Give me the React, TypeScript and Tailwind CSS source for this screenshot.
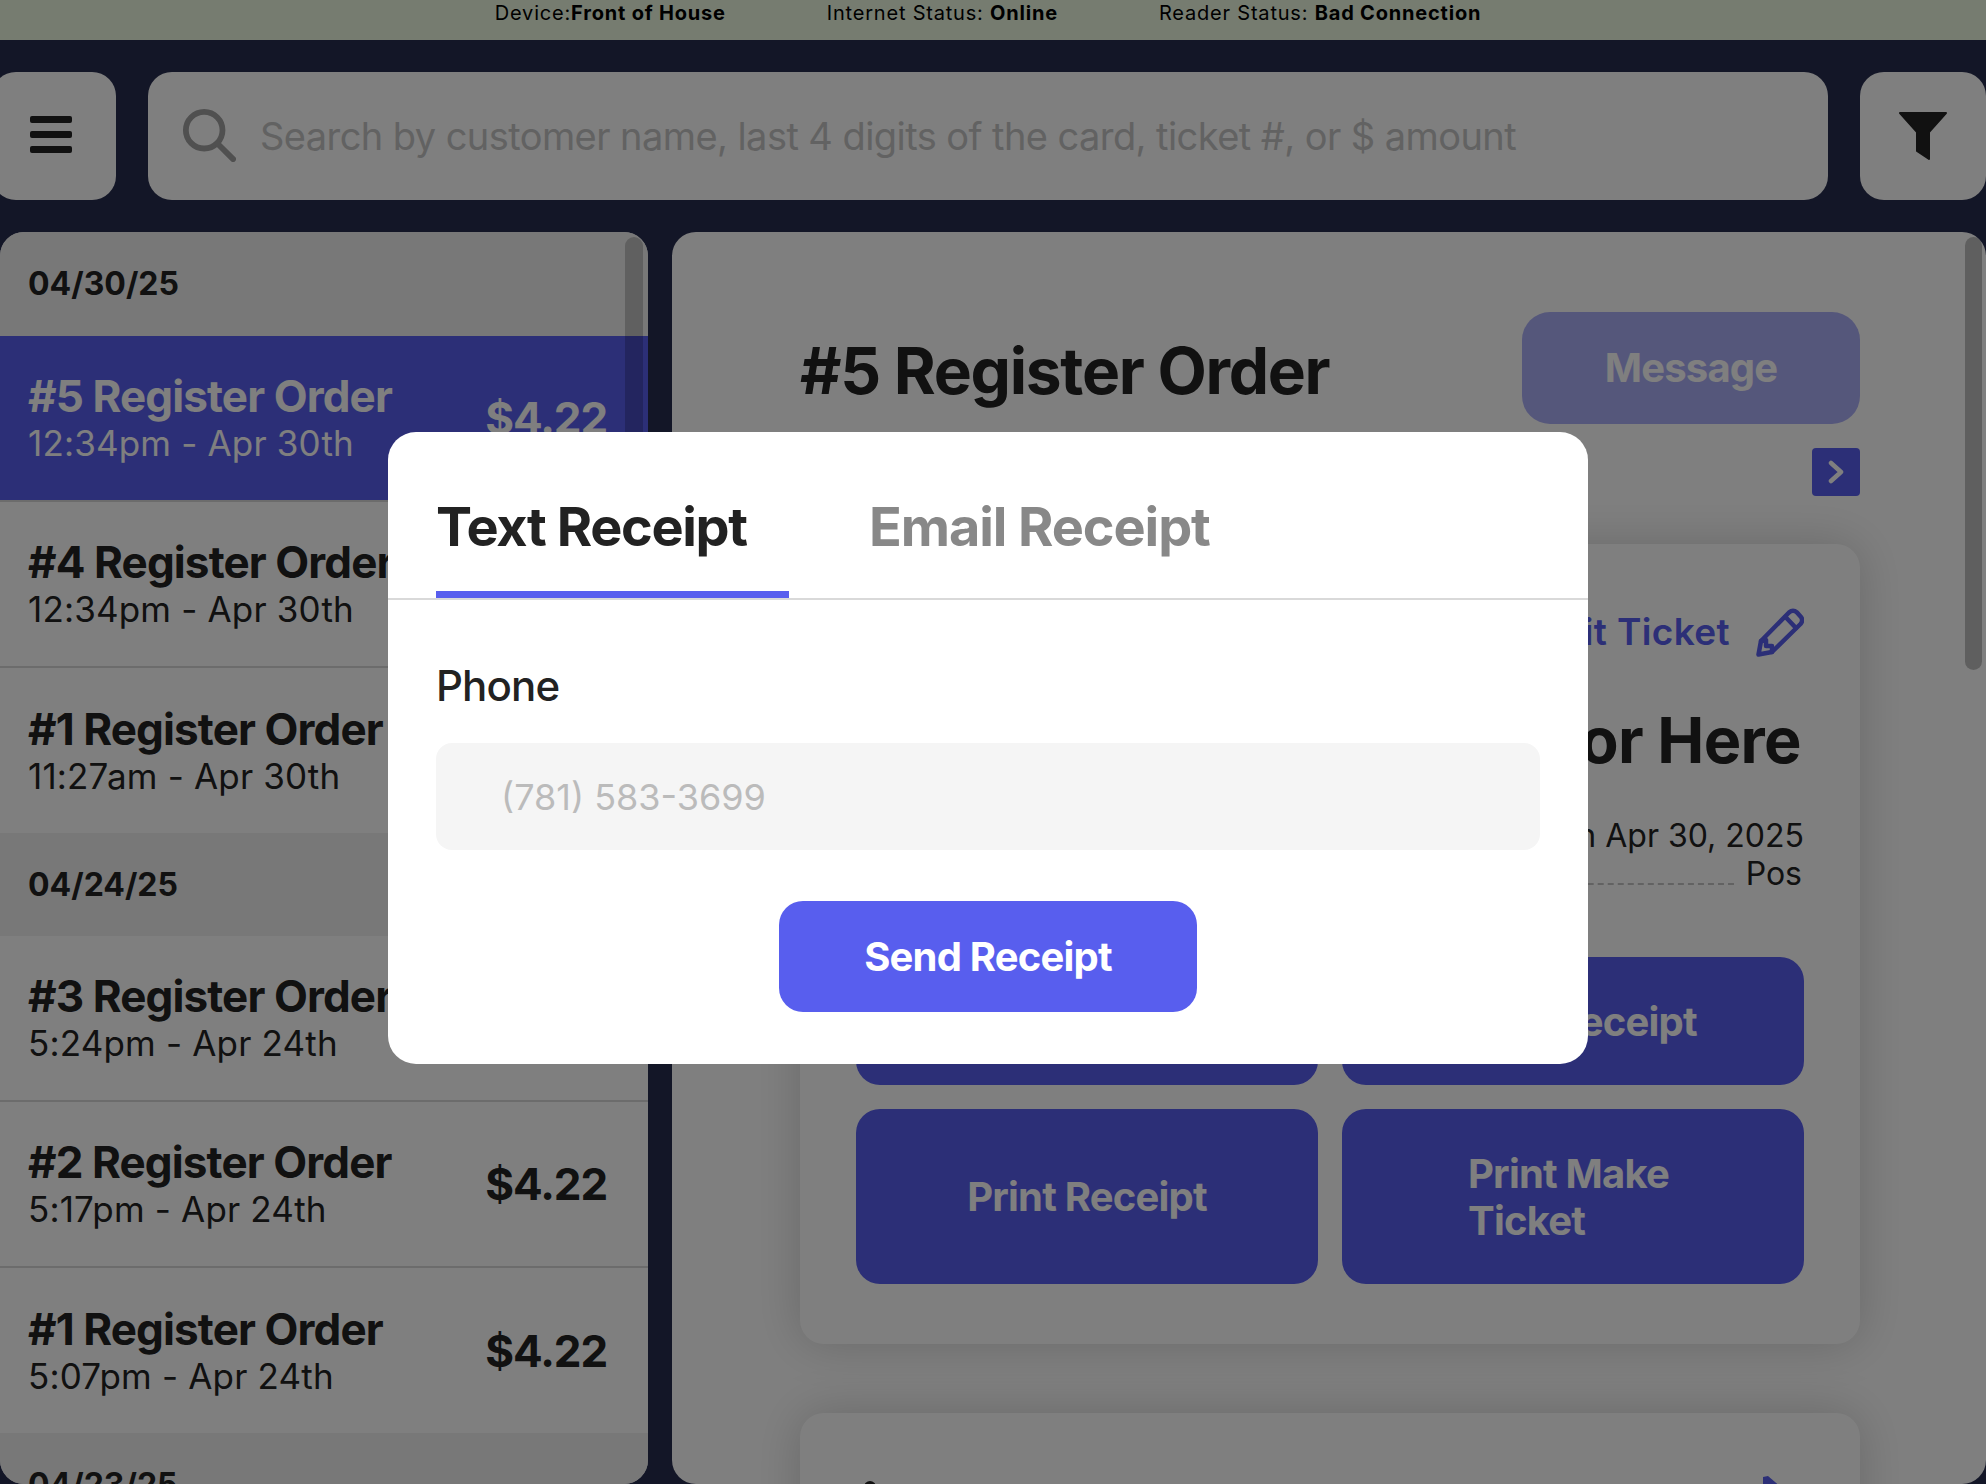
const orders = [
  { type: "date", label: "04/30/25" },
  { type: "order", title: "#5 Register Order", time: "12:34pm - Apr 30th", active: true },
  { type: "order", title: "#4 Register Order", time: "12:34pm - Apr 30th" },
  { type: "order", title: "#1 Register Order", time: "11:27am - Apr 30th", last: true },
  { type: "date", label: "04/24/25" },
  { type: "order", title: "#3 Register Order", time: "5:24pm - Apr 24th" },
  { type: "order", title: "#2 Register Order", time: "5:17pm - Apr 24th" },
  { type: "order", title: "#1 Register Order", time: "5:07pm - Apr 24th", last: true },
  { type: "date", label: "04/23/25" },
];

const OrderList = () => (
  <aside className="relative w-[648px] shrink-0 h-[1252px] overflow-hidden rounded-[24px] bg-white">
    {orders.map((item, i) =>
      item.type === "date" ? (
        <div
          key={i}
          className={`flex items-center pl-[28px] bg-[#f0f0f0] text-[32px] font-bold text-[#222] ${i === 0 ? "h-[104px]" : "h-[103px]"}`}
        >
          {item.label}
        </div>
      ) : (
        <div
          key={i}
          className={`flex items-center justify-between pl-[28px] pr-[41px] ${item.last ? "h-[165px]" : "h-[166px] border-b-2 border-[#d9d9d9]"} ${
            item.active ? "bg-[#585eee] text-white" : "bg-white text-[#222]"
          }`}
        >
          <div className="flex flex-col">
            <span className="text-[44px] leading-[50px] font-bold tracking-[-0.02em] whitespace-nowrap">{item.title}</span>
            <span className="text-[35px] leading-[44px] font-normal tracking-[0.005em] whitespace-nowrap">{item.time}</span>
          </div>
          <span className="text-[44px] font-bold tracking-[-0.025em]">$4.22</span>
        </div>
      )
    )}
    <div className="absolute right-[5px] top-[5px] w-[18px] h-[380px] rounded-full bg-black/20" />
  </aside>
);

const ActionButton = ({ label, className = "" }: { label?: string; className?: string }) => (
  <button className={`rounded-[24px] bg-[#585eee] text-white text-[40px] leading-[47px] font-bold tracking-[-0.02em] ${className}`}>{label}</button>
);

const TicketPanel = () => (
  <main className="relative flex-1 h-[1252px] overflow-hidden rounded-[24px] bg-white pl-[128px] pr-[126px] pt-[80px]">
    <div className="flex items-center justify-between">
      <h1 className="pt-[5px] text-[64px] font-bold tracking-[-0.02em] text-[#222]">#5 Register Order</h1>
      <button className="w-[338px] h-[112px] rounded-[28px] bg-[#585eee]/50 text-white text-[40px] font-bold tracking-[-0.02em]">Message</button>
    </div>

    <div className="flex justify-end mt-[24px]">
      <button className="w-[48px] h-[48px] rounded-[4px] bg-[#585eee] flex items-center justify-center">
        <svg width="16" height="24" viewBox="0 0 16 24" fill="none" stroke="white" strokeWidth="4.5" strokeLinecap="round" strokeLinejoin="round">
          <path d="M3 3 L13 12 L3 21" />
        </svg>
      </button>
    </div>

    <section className="mt-[48px] h-[800px] rounded-[24px] bg-white px-[56px] pt-[64px] shadow-[0_0_48px_rgba(0,0,0,0.18)]">
      <div className="flex items-center justify-end gap-[26px] text-[#585eee] text-[37px] font-semibold tracking-[0.01em] h-[48px]">
        <span>Edit Ticket</span>
        <svg width="48" height="49" viewBox="0 0 48 49" fill="none" stroke="currentColor" strokeWidth="4.5" strokeLinejoin="round" strokeLinecap="round">
          <path d="M2.5 46.5 L5 33 L33 4.5 Q37 1 41 4.5 L45 9 Q47.5 12.5 44.5 16 L16 44 Z" />
          <path d="M29.5 9 L40 20" />
          <path d="M5 33 L10 32 L10 38 L16 38 L16 44" />
        </svg>
      </div>
      <div className="mt-[49px] pr-[3px] text-right text-[63px] leading-[70px] font-bold tracking-[-0.01em] text-[#222]">For Here</div>
      <div className="mt-[42px] text-right text-[32px] leading-[38px] text-[#222]">Placed on Apr 30, 2025</div>
      <div className="flex items-end gap-[12px] text-[32px] leading-[38px] text-[#222]">
        <span className="flex-1 border-b-2 border-dashed border-[#c4c4c4] mb-[8px]" />
        <span className="mr-[2px]">Pos</span>
      </div>
      <div className="mt-[64px] grid grid-cols-2 gap-x-[24px] gap-y-[24px]">
        <ActionButton className="h-[128px]" />
        <ActionButton className="h-[128px]" label="Send Receipt" />
        <ActionButton className="h-[175px]" label="Print Receipt" />
        <ActionButton className="h-[175px] text-left pl-[126px] pr-[90px]" label="Print Make Ticket" />
      </div>
    </section>

    <section className="relative mt-[69px] h-[200px] rounded-[24px] bg-white shadow-[0_0_48px_rgba(0,0,0,0.18)]">
      <span className="absolute left-[64px] top-[68px] w-[12px] h-[6px] rounded-t-full bg-[#222]" />
      <svg className="absolute left-[962px] top-[63px]" width="20" height="12" viewBox="0 0 20 12" fill="#585eee">
        <path d="M1 1 L6 0 L20 12 L1 12 Z" />
      </svg>
    </section>

    <div className="absolute right-[4px] top-[5px] w-[17px] h-[433px] rounded-full bg-black/25" />
  </main>
);

const ReceiptModal = () => (
  <div className="absolute inset-0 bg-black/50 pl-[388px] pt-[432px]">
    <div className="w-[1200px] h-[632px] rounded-[28px] bg-white">
      <div className="flex h-[168px] border-b-2 border-[#d9d9d9] pl-[48px]">
        <div className="w-[353px] h-[166px] border-b-[7px] border-[#585eee] pt-[64px] text-[54px] leading-[62px] font-bold tracking-[-0.025em] text-[#222]">
          Text Receipt
        </div>
        <div className="ml-[80px] pt-[64px] text-[54px] leading-[62px] font-bold tracking-[-0.02em] text-[#888]">Email Receipt</div>
      </div>
      <div className="px-[48px] pt-[62px]">
        <label className="block text-[42px] leading-[48px] font-medium tracking-[-0.02em] text-[#222]">Phone</label>
        <div className="mt-[33px] h-[107px] rounded-[16px] bg-[#f5f5f5] pl-[65px] flex items-center text-[36px] text-[#bbb]">
          (781) 583-3699
        </div>
        <div className="mt-[51px] flex justify-center">
          <button className="w-[418px] h-[111px] rounded-[24px] bg-[#585eee] text-white text-[40px] font-bold tracking-[-0.02em]">Send Receipt</button>
        </div>
      </div>
    </div>
  </div>
);

export default function App() {
  return (
    <div className="relative w-[1986px] h-[1484px] overflow-hidden bg-[#262c4e] font-['Inter',sans-serif]">
      <div className="h-[40px] bg-[#ecf8e0] flex items-center justify-center gap-[101px] pb-[14px] pr-[10px] text-[20px] leading-[26px] tracking-[0.04em] text-black">
        <span>Device:<b>Front of House</b></span>
        <span>Internet Status: <b>Online</b></span>
        <span>Reader Status: <b>Bad Connection</b></span>
      </div>

      <div className="flex gap-[32px] mt-[32px] h-[128px]">
        <button className="w-[124px] -ml-[8px] h-full shrink-0 rounded-[24px] bg-white flex flex-col items-center justify-center gap-[8px] pr-[6px] pb-[3px]">
          <span className="w-[42px] h-[7px] rounded-[2px] bg-[#222]" />
          <span className="w-[42px] h-[7px] rounded-[2px] bg-[#222]" />
          <span className="w-[42px] h-[7px] rounded-[2px] bg-[#222]" />
        </button>
        <div className="w-[1680px] h-full shrink-0 rounded-[24px] bg-white flex items-center pl-[34px]">
          <svg className="mb-[2px]" width="54" height="54" viewBox="0 0 56 56" fill="none" stroke="#a0a0a0" strokeWidth="6" strokeLinecap="round">
            <circle cx="23" cy="23" r="19" />
            <path d="M37 37 L53 53" />
          </svg>
          <span className="ml-[24px] text-[38px] tracking-[-0.015em] text-[#c4c4c4] whitespace-nowrap">
            Search by customer name, last 4 digits of the card, ticket #, or $ amount
          </span>
        </div>
        <button className="w-[126px] h-full shrink-0 rounded-[24px] bg-white flex items-center pl-[39px]">
          <svg width="48" height="48" viewBox="0 0 48 48" fill="#222" stroke="#222" strokeWidth="2" strokeLinejoin="round">
            <path d="M1 1 H47 L30 20 V47 L18 39 V20 Z" />
          </svg>
        </button>
      </div>

      <div className="flex gap-[24px] mt-[32px]">
        <OrderList />
        <TicketPanel />
      </div>

      <ReceiptModal />
    </div>
  );
}
